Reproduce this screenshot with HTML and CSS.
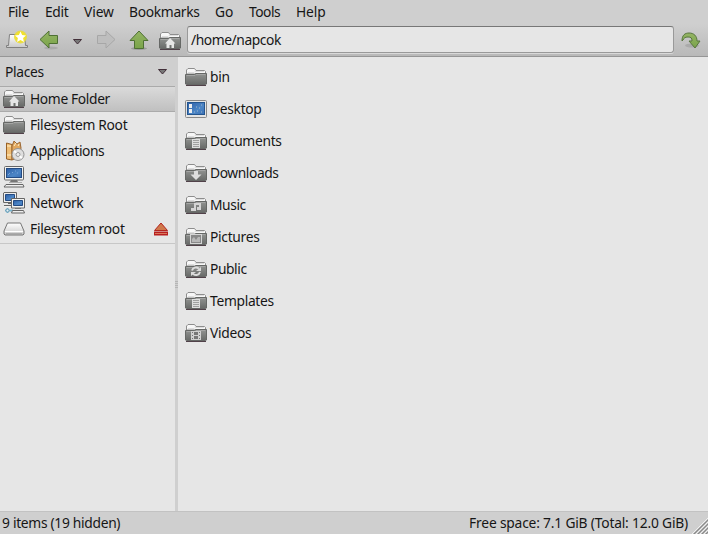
FILE: index.html
```
<!DOCTYPE html>
<html lang="en">
<head>
<meta charset="utf-8">
<title>napcok</title>
<link rel="stylesheet" href="styles.css">
</head>
<body>
<svg class="defs" width="0" height="0">
  <defs>
    <linearGradient id="body" x1="0" y1="0" x2="0" y2="1"><stop offset="0" stop-color="#777"/><stop offset=".15" stop-color="#8c8e8c"/><stop offset="1" stop-color="#686a68"/></linearGradient>
    <linearGradient id="green" x1="0" y1="0" x2="0" y2="1"><stop offset="0" stop-color="#94b464"/><stop offset="1" stop-color="#7aa44a"/></linearGradient>
    <linearGradient id="screen" x1="0" y1="0" x2="1" y2="1"><stop offset="0" stop-color="#2d5ea5"/><stop offset=".6" stop-color="#4d86c6"/><stop offset="1" stop-color="#3a6fb4"/></linearGradient>
    <linearGradient id="metal" x1="0" y1="0" x2="0" y2="1"><stop offset="0" stop-color="#fff"/><stop offset="1" stop-color="#c9c9c9"/></linearGradient>
    <symbol id="folder" viewBox="0 0 22 18">
      <path d="M1.500 6V2L3 .5h6.500L11 2.500h8.500l1 1V6z" fill="#f7f7f7" stroke="#8d8d8d"/>
      <path d="M3 4.500h6l1-1h9" fill="none" stroke="#ddd"/>
      <path d="M.5 6.500h9l1.500-1h10.500V16l-1 .5h-19L.5 16z" fill="url(#body)" stroke="#666866"/>
      <path d="M1.500 7.500h8.500l1-1h9.500" fill="none" stroke="#a4a5a4"/>
      <path d="M1 17.500h20" stroke="#514149"/>
    </symbol>
    <symbol id="page" viewBox="0 0 22 18"><path d="M7 7h8v9H7z" fill="#dedede"/><path d="M8 8.500h6M8 10.500h6M8 12.500h6M8 14.500h6" stroke="#a0a0a0"/></symbol>
    <symbol id="house" viewBox="0 0 22 18"><path d="M11 6l5.500 5.500H15V16h-2.500v-3h-2v3H7.500v-4.500H6z" fill="#e6e6e6"/></symbol>
    <symbol id="monitor" viewBox="0 0 22 22">
      <rect x="1.500" y=".5" width="19" height="13.500" rx="1" fill="#f2f2f0" stroke="#666"/>
      <rect x="3.500" y="2.500" width="15" height="9" fill="url(#screen)" stroke="#244b83"/>
      <path d="M5 9l2-2M9 7l1-1M12 5h1M14 7h1" stroke="#7ba5da"/>
      <path d="M8 14h6l1 2H7z" fill="#777"/><path d="M6 16.500h13" stroke="#aaa"/>
      <path d="M3 18.500h17l1 2.500H1z" fill="#eee" stroke="#666"/>
    </symbol>
  </defs>
</svg>
<div class="window">
  <nav class="menubar"><span class="m1">File</span><span class="m2">Edit</span><span class="m3">View</span><span class="m4">Bookmarks</span><span class="m5">Go</span><span class="m6">Tools</span><span class="m7">Help</span></nav>
  <div class="toolbar">
    <svg class="newtab" width="24" height="20" viewBox="0 0 24 20">
      <path d="M1.500 15.500h2l1-11h15l1 11h2v2h-21z" fill="url(#metal)" stroke="#808080"/>
      <circle cx="15.500" cy="7" r="6.500" fill="#eadb38" opacity=".9"/><circle cx="15.500" cy="7" r="5" fill="#f3e327"/>
      <path d="M15.500 1.500l1.600 3.600 3.900.4-2.900 2.600.8 3.900-3.400-2-3.400 2 .8-3.900L10 5.500l3.900-.4z" fill="#fff"/>
    </svg>
    <svg class="back" width="20" height="20" viewBox="0 0 20 20"><ellipse cx="12" cy="18" rx="7" ry="1.500" fill="#aaa"/><path d="M1 9.500L10 1v4.500h8.500v8H10V18z" fill="url(#green)" stroke="#4e7034"/></svg>
    <svg class="history" width="9" height="6" viewBox="0 0 9 6"><path d="M.5.5h8L4.500 5z" fill="#777" stroke="#422f39"/></svg>
    <svg class="forward" width="20" height="20" viewBox="0 0 20 20"><path d="M19 9.500L10 1v4.500H1.500v8H10V18z" fill="#bebebe" stroke="#a7a7a7"/></svg>
    <svg class="up" width="20" height="20" viewBox="0 0 20 20"><ellipse cx="10" cy="18.500" rx="8" ry="1.500" fill="#9a9a9a"/><path d="M10 1L1 10.500h4.500v8h9v-8H19z" fill="url(#green)" stroke="#4e7034"/></svg>
    <svg class="home" width="22" height="18"><use href="#folder"/><use href="#house"/></svg>
    <div class="path">/home/napcok</div>
    <svg class="jump" width="20" height="18" viewBox="0 0 20 18"><ellipse cx="11" cy="13.500" rx="7" ry="2" fill="#aaa"/><path d="M1 9C1 3 4 1 8 1c5 0 8 3 8 8h3l-5 7-6-7h3c0-3-1-4-4-4S3 6 2 8z" fill="url(#green)" stroke="#58763e"/></svg>
  </div>
  <main class="content">
    <aside class="sidebar">
      <div class="places"><span>Places</span><svg width="9" height="6" viewBox="0 0 9 6"><path d="M.5.5h8L4.500 5z" fill="#777" stroke="#422f39"/></svg></div>
      <ul class="tree">
        <li class="selected"><svg width="22" height="18"><use href="#folder"/><use href="#house"/></svg><span class="s1">Home Folder</span></li>
        <li><svg width="22" height="18"><use href="#folder"/></svg><span class="s2">Filesystem Root</span></li>
        <li><svg width="22" height="22" viewBox="0 0 22 22">
          <path d="M3.500 3L9 4.500V20l-5.500-1z" fill="#efbd75" stroke="#986127"/><path d="M9 6l2-5 3 3 3-2 1 6-2 9-7 3z" fill="#e0a75f" stroke="#9b6733"/>
          <path d="M11 6l2-3M15 6l1-2M4 6h4M4 15h4" stroke="#fff0ca"/>
          <circle cx="15" cy="14.500" r="6" fill="#dedede" stroke="#929292"/><path d="M15 14l-4-3M15 15l4 3" stroke="#fff" stroke-width="2"/><circle cx="15" cy="14.500" r="2" fill="#eee" stroke="#999"/></svg><span class="s3">Applications</span></li>
        <li><svg width="22" height="22"><use href="#monitor"/></svg><span class="s4">Devices</span></li>
        <li><svg width="22" height="22" viewBox="0 0 22 22">
          <path d="M1 .5h12.500v10H.5V1z" fill="#eee" stroke="#666"/><path d="M2.500 2.500h9v6h-9z" fill="url(#screen)" stroke="#244b83"/><path d="M1 13.500h9M5 11.500h4" stroke="#666"/><path d="M1 14.500h8" stroke="#eee"/>
          <path d="M2 18.500h8M4.500 16v5" stroke="#79b6d0" stroke-width="2"/><circle cx="4.500" cy="18.500" r="1.500" fill="#e2f1f6" stroke="#6999b2"/>
          <path d="M8.500 6.500h13v9.500h-13z" fill="#f2f2f0" stroke="#666"/><path d="M10.500 8.500h9v5h-9z" fill="url(#screen)" stroke="#244b83"/><path d="M12 16.500h6" stroke="#777"/><path d="M9.500 18.500h11l1 2.500h-13z" fill="#eee" stroke="#666"/></svg><span class="s5">Network</span></li>
        <li><svg width="22" height="14" viewBox="0 0 22 14"><path d="M4.500 1h13l3.500 8v3l-1 1H2l-1-1V9z" fill="url(#metal)" stroke="#777"/><path d="M2 9.500h18" stroke="#fff"/><path d="M3 11.500h16" stroke="#aaa"/></svg><span class="s6">Filesystem root</span>
          <svg class="eject" width="16" height="14" viewBox="0 0 16 14"><path d="M8 1l6.500 7.500h-13z" fill="#cf794b" stroke="#b3241f"/><path d="M1 9.500h14v4H1z" fill="#b81e1e"/><path d="M2 11.500h12" stroke="#d9775a"/></svg></li>
      </ul>
    </aside>
    <div class="splitter"><i></i><i></i><i></i><i></i></div>
    <ul class="files">
      <li><svg width="22" height="18"><use href="#folder"/></svg><span>bin</span></li>
      <li><svg width="22" height="18" viewBox="0 0 22 18"><rect x=".5" y=".5" width="21" height="17" rx="1" fill="#e4e4e4" stroke="#888"/><rect x="2.500" y="2.500" width="17" height="12" fill="url(#screen)" stroke="#24558e"/><path d="M4 4h3v4H4zM4 9h3v4H4z" fill="#eee"/><path d="M9 12h1M12 11h1M14 8h1M16 5h1M16 12h1M11 7h1" stroke="#a3bac8"/></svg><span class="f2">Desktop</span></li>
      <li><svg width="22" height="18"><use href="#folder"/><use href="#page"/></svg><span class="f3">Documents</span></li>
      <li><svg width="22" height="18"><use href="#folder"/><path d="M9 7h4v3.500h3.500L11 16l-5.500-5.500H9z" fill="#dedede"/></svg><span class="f4">Downloads</span></li>
      <li><svg width="22" height="18"><use href="#folder"/><path d="M9 7h7v7h-4v-3h2V9h-3v6H6v-3h3z" fill="#d5d5d5"/></svg><span class="f5">Music</span></li>
      <li><svg width="22" height="18"><use href="#folder"/><rect x="5.500" y="6.500" width="11" height="9" fill="#888" stroke="#d5d5d5"/><path d="M7 14v-3l2-2 2 3 2-3h2v5z" fill="#b7b7b7"/></svg><span class="f6">Pictures</span></li>
      <li><svg width="22" height="18"><use href="#folder"/><path d="M7 10.500c1-3 4-4 7-2M15 12c-1 3-4 4-7 2" fill="none" stroke="#dcdcdc" stroke-width="2"/><path d="M16 7v4h-5zM6 16v-4h5z" fill="#dcdcdc"/></svg><span class="f7">Public</span></li>
      <li><svg width="22" height="18"><use href="#folder"/><use href="#page"/></svg><span class="f8">Templates</span></li>
      <li><svg width="22" height="18"><use href="#folder"/><path d="M6 7h10v9H6z" fill="#d0d0d0"/><path d="M9 8h4v3H9zM9 12h4v3H9zM7 8h1v1H7zm0 3h1v1H7zm0 3h1v1H7zM14 8h1v1h-1zm0 3h1v1h-1zm0 3h1v1h-1z" fill="#777"/></svg><span class="f9">Videos</span></li>
    </ul>
  </main>
  <footer class="status"><span class="count">9 items (19 hidden)</span><span class="space">Free space: 7.1 GiB (Total: 12.0 GiB)</span><svg class="grip" width="17" height="17" viewBox="0 0 17 17"><path d="M2 18L18 2M6 18L18 6M10 18L18 10M14 18l4-4" stroke="#888" stroke-width="1.200"/><path d="M0 18L18 0M4 18L18 4M8 18L18 8M12 18l6-6" stroke="#f1f1f1"/></svg></footer>
</div>
</body>
</html>
```
FILE: styles.css
```
* { box-sizing: border-box; }
body { margin: 0; font: 13.8px/20px "Noto Sans", "Open Sans", sans-serif; letter-spacing: -.3px; color: #161616; background: #cfcfcf; }
.defs { position: absolute; }
svg { display: block; flex: none; }
ul { list-style: none; margin: 0; padding: 0; }
span { white-space: nowrap; }
.window { width: 708px; height: 534px; display: flex; flex-direction: column; overflow: hidden; }
.menubar { height: 24px; display: flex; padding: 2px 0 0 8px; flex: none; }
.menubar span { flex: none; }
.m1 { width: 37px; } .m2 { width: 39px; } .m3 { width: 45px; } .m4 { width: 86px; }
.m5 { width: 34px; } .m6 { width: 47px; letter-spacing: -.5px; }
.m3, .m5, .m7 { letter-spacing: -.1px; }
.s1 { letter-spacing: -.36px; }
.s3, .f4, .f7, .f5, .path { letter-spacing: -.42px; }
.s4 { letter-spacing: -.1px; }
.s6 { letter-spacing: -.27px; }
.space { letter-spacing: -.19px; }
.toolbar { height: 33px; flex: none; display: flex; align-items: flex-start; padding-left: 5px; background: linear-gradient(#cfcfcf, #b9b9b9); border-bottom: 1px solid #969696; }
.newtab { margin-top: 6px; }
.back { margin: 6px 0 0 10px; }
.history { margin: 15px 0 0 14px; }
.forward { margin: 6px 0 0 14px; }
.up { margin: 6px 0 0 13px; }
.home { margin: 8px 0 0 10px; }
.path { margin: 2px 0 0 6px; width: 487px; height: 27px; padding: 3px 3px; background: #e6e6e6; border: 1px solid #999; border-top-color: #777; border-radius: 3px; box-shadow: 0 1px #d9d9d9; }
.jump { margin: 8px 0 0 7px; }
.content { display: flex; flex: 1; min-height: 0; background: #e6e6e6; }
.sidebar { width: 175px; }
.places { height: 29px; display: flex; align-items: center; justify-content: space-between; padding: 0 8px 0 5px; background: #cfcfcf; }
.tree { padding-bottom: 1px; border-bottom: 1px solid #c7c7c7; }
.tree li { height: 26px; display: flex; align-items: center; padding-left: 3px; gap: 5px; }
.tree .selected { background: linear-gradient(#dadada, #c0c0c0); border: solid #aaa; border-width: 1px 0; }
.tree .eject { margin: 0 6px 0 auto; }
.splitter { width: 3px; background: #cfcfcf; display: flex; flex-direction: column; justify-content: center; gap: 1px; }
.splitter i { height: 1px; background: #b5b5b5; }
.files { padding: 4px 0 0 7px; }
.files li { height: 32px; display: flex; align-items: center; gap: 3px; }
.status { position: relative; height: 23px; flex: none; display: flex; justify-content: space-between; padding: 1px 20px 0 2px; border-top: 1px solid #c2c2c2; background: #cfcfcf; }
.grip { position: absolute; right: 0; bottom: 0; }
```
